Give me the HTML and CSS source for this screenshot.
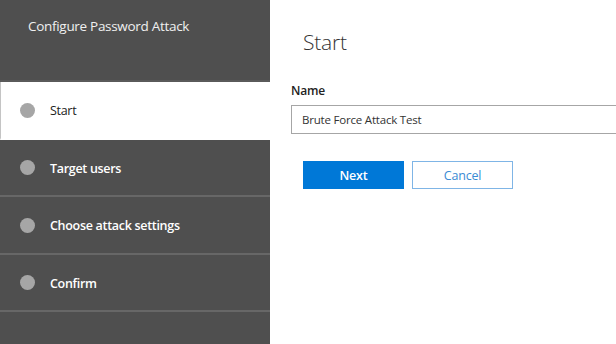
FILE: index.html
```html
<!DOCTYPE html>
<html>
<head>
<meta charset="utf-8">
<link rel="stylesheet" href="styles.css">
</head>
<body>
<div class="wizard">
  <aside class="sidebar">
    <div class="sidebar-title">Configure Password Attack</div>
    <nav class="steps">
      <div class="step active"><span class="dot"></span><span class="label">Start</span></div>
      <div class="step"><span class="dot"></span><span class="label">Target users</span></div>
      <div class="step"><span class="dot"></span><span class="label">Choose attack settings</span></div>
      <div class="step"><span class="dot"></span><span class="label">Confirm</span></div>
    </nav>
  </aside>
  <main class="content">
    <h1 class="page-title">Start</h1>
    <label class="field-label">Name</label>
    <div class="text-input">Brute Force Attack Test</div>
    <div class="actions">
      <button class="btn primary">Next</button>
      <button class="btn secondary">Cancel</button>
    </div>
  </main>
</div>
</body>
</html>
```
FILE: styles.css
```css
html, body {
  margin: 0;
  padding: 0;
  background: #ffffff;
  font-family: "Open Sans", "Noto Sans", sans-serif;
  overflow: hidden;
}
.wizard {
  display: flex;
  width: 616px;
  height: 344px;
}
.sidebar {
  width: 270px;
  flex: 0 0 270px;
  background: #4f4f4f;
  display: flex;
  flex-direction: column;
}
.sidebar-title {
  height: 82px;
  box-sizing: border-box;
  padding: 17px 0 0 28px;
  color: #f0f0f0;
  font-size: 13.5px;
  letter-spacing: -0.3px;
  border-bottom: 2px solid #5a5a5a;
}
.steps {
  display: flex;
  flex-direction: column;
}
.step {
  height: 55.5px;
  border-bottom: 2px solid #676767;
  display: flex;
  align-items: center;
  padding-left: 20px;
  padding-top: 2px;
  box-sizing: content-box;
  gap: 15px;
  color: #ffffff;
  font-weight: 600;
  font-size: 12.5px;
  letter-spacing: -0.3px;
}
.step {
  height: 53.5px;
}
.step .dot {
  margin-top: -1px;
}
.step.active {
  background: #ffffff;
  color: #222222;
  border-bottom-color: #ffffff;
  border-left: 1px solid #c4c4c4;
  padding-left: 19px;
  font-weight: 400;
}
.dot {
  width: 15px;
  height: 15px;
  border-radius: 50%;
  background: #a6a6a6;
  flex: 0 0 15px;
}
.content {
  flex: 1;
  padding-left: 21px;
  display: flex;
  flex-direction: column;
  min-width: 0;
}
.page-title {
  margin: 27px 0 0 12px;
  font-size: 21px;
  font-weight: 300;
  color: #333333;
  line-height: 30px;
  letter-spacing: -0.2px;
}
.field-label {
  margin-top: 26px;
  font-size: 12px;
  font-weight: 600;
  color: #222222;
  line-height: 16px;
  letter-spacing: -0.2px;
}
.text-input {
  margin-top: 6px;
  height: 29px;
  box-sizing: border-box;
  border: 1px solid #a6a6a6;
  border-right: none;
  padding-left: 10px;
  font-size: 11.5px;
  line-height: 27px;
  color: #333333;
  letter-spacing: -0.2px;
}
.actions {
  display: flex;
  gap: 8px;
  margin: 27px 0 0 12px;
}
.btn {
  width: 101px;
  height: 28px;
  box-sizing: border-box;
  font-family: inherit;
  font-size: 12.5px;
  letter-spacing: -0.2px;
  padding: 0;
  margin: 0;
  cursor: pointer;
}
.btn.primary {
  background: #0078d7;
  border: 1px solid #0078d7;
  color: #ffffff;
  font-weight: 600;
}
.btn.secondary {
  background: #ffffff;
  border: 1px solid #7fb5e6;
  color: #3a8bd4;
}
```
